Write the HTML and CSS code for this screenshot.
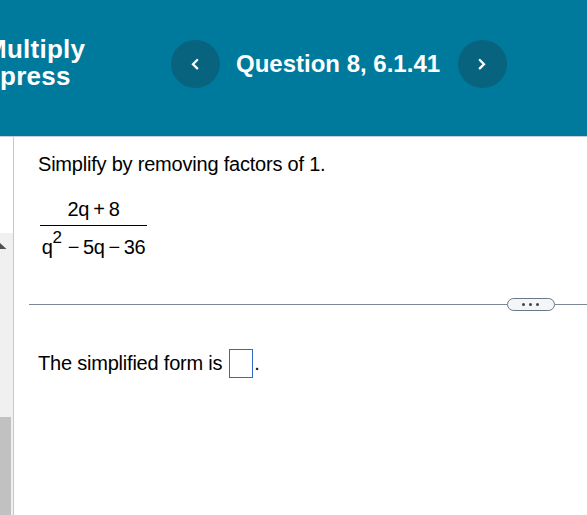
FILE: index.html
```html
<!DOCTYPE html>
<html lang="en">
<head>
    <meta charset="UTF-8">
    <meta name="viewport" content="width=device-width, initial-scale=1.0">
    <title>Question 8, 6.1.41</title>
    <link rel="stylesheet" href="styles.css">
</head>
<body>
    <header class="header">
        <div class="section-title">
            <span class="title-line first">Multiply</span>
            <span class="title-line">press</span>
        </div>
        <button class="nav-btn" aria-label="Previous question">
            <svg width="10" height="14" viewBox="0 0 10 14"><path d="M7.2 3 L3 7.2 L7.2 11.4"/></svg>
        </button>
        <h1 class="question-title">Question 8, 6.1.41</h1>
        <button class="nav-btn" aria-label="Next question">
            <svg width="10" height="14" viewBox="0 0 10 14"><path d="M2.8 3 L7 7.2 L2.8 11.4"/></svg>
        </button>
    </header>

    <div class="main">
        <div class="sidebar">
            <div class="scrollbar">
                <svg class="scroll-up" width="7" height="6" viewBox="0 0 7 6"><path d="M0 0 L6.5 6 L0 6 Z"/></svg>
                <div class="thumb"></div>
            </div>
        </div>

        <div class="content">
            <p class="prompt">Simplify by removing factors of 1.</p>
            <div class="fraction">
                <div class="numerator"><span>2q</span><span>+</span><span>8</span></div>
                <div class="denominator"><span>q<sup>2</sup></span><span class="wide">−</span><span>5q</span><span>−</span><span>36</span></div>
            </div>
            <div class="divider">
                <div class="line"></div>
                <button class="more" aria-label="More"><i></i><i></i><i></i></button>
                <div class="line end"></div>
            </div>
            <div class="answer">
                <span>The simplified form is</span>
                <input type="text" class="answer-box" aria-label="Answer">
                <span>.</span>
            </div>
        </div>
    </div>
</body>
</html>
```
FILE: styles.css
```css
* {
    box-sizing: border-box;
}
body {
    margin: 0;
    height: 515px;
    display: flex;
    flex-direction: column;
    overflow: hidden;
    background: #fff;
    color: #000;
    font-family: Arial, "Liberation Sans", sans-serif;
    font-size: 20px;
    letter-spacing: -0.21px;
}
.header {
    display: flex;
    align-items: flex-start;
    height: 137px;
    padding-top: 40px;
    background: #007a9c;
    border-bottom: 1px solid #c7cbd9;
    color: #fff;
    letter-spacing: 0;
}
.section-title {
    width: 171px;
    margin-top: -4px;
    font-size: 26px;
    font-weight: bold;
    letter-spacing: 0.25px;
    line-height: 27px;
}
.title-line {
    display: block;
}
.title-line.first {
    margin-left: -15px;
}
.nav-btn {
    display: flex;
    align-items: center;
    justify-content: center;
    width: 49px;
    height: 48px;
    padding: 0 2px 0 0;
    border: none;
    border-radius: 50%;
    background: #08637f;
    cursor: pointer;
}
.nav-btn path {
    fill: none;
    stroke: #fff;
    stroke-width: 2.3;
    stroke-linecap: round;
}
.question-title {
    width: 238px;
    margin: 0;
    padding-left: 16px;
    font-size: 24px;
    line-height: 48px;
    white-space: nowrap;
}
.main {
    display: flex;
    flex: 1;
}
.sidebar {
    display: flex;
    width: 14px;
    padding-top: 96px;
    border-right: 1px solid #c7c7d4;
}
.scrollbar {
    display: flex;
    flex-direction: column;
    justify-content: space-between;
    width: 13px;
    padding-top: 10px;
    background: #f0f0f0;
}
.scroll-up {
    fill: #505050;
}
.thumb {
    width: 11px;
    height: 98px;
    background: #c1c1c1;
}
.content {
    flex: 1;
    padding: 15px 0 0 15px;
}
.prompt {
    margin: 0 0 0 9px;
    line-height: 24px;
}
.fraction {
    width: 107px;
    margin: 21px 0 0 11px;
}
.numerator,
.denominator {
    display: flex;
    justify-content: center;
    gap: 4px;
    line-height: 24px;
}
.numerator {
    height: 29px;
    border-bottom: 1px solid #000;
}
.denominator {
    height: 36px;
    padding-top: 9px;
    gap: 4px;
    letter-spacing: -0.4px;
}
.denominator .wide {
    margin-left: 2px;
}
.denominator sup {
    font-size: 17px;
    line-height: 0;
    vertical-align: 11px;
}
.divider {
    display: flex;
    align-items: center;
    height: 14px;
    margin-top: 35px;
}
.line {
    flex: 1;
    height: 1px;
    background: #7d8796;
}
.line.end {
    flex: none;
    width: 32px;
}
.more {
    display: flex;
    align-items: center;
    justify-content: center;
    gap: 4px;
    width: 48px;
    height: 13px;
    padding: 0 1px 0 0;
    border: 1px solid #6a7888;
    border-radius: 7px;
    background: #f3f5f7;
}
.more i {
    width: 3px;
    height: 3px;
    border-radius: 50%;
    background: #444;
}
.answer {
    display: flex;
    align-items: center;
    margin: 38px 0 0 9px;
}
.answer-box {
    width: 24px;
    height: 29px;
    margin: 0 1px 0 7px;
    padding: 0;
    border: 1px solid #3367cc;
    outline: none;
}
```
